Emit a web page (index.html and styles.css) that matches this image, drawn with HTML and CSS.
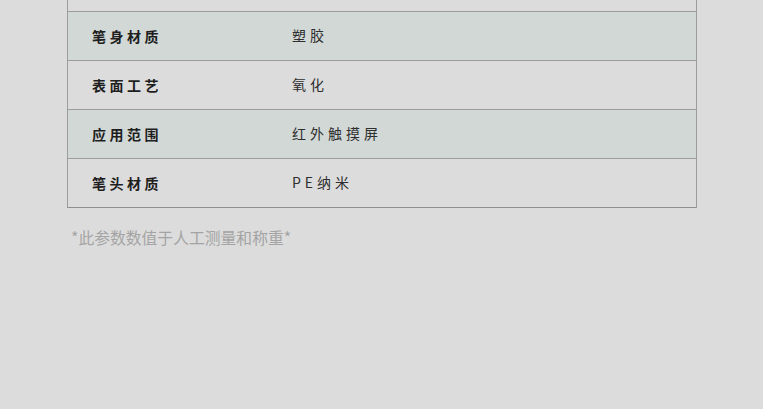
FILE: index.html
```html
<!DOCTYPE html>
<html lang="zh">
<head>
<meta charset="utf-8">
<link rel="stylesheet" href="styles.css">
</head>
<body>
<div class="page">
  <div class="spec">
    <div class="row row-partial"></div>
    <div class="row tint">
      <div class="label">笔身材质</div>
      <div class="value">塑胶</div>
    </div>
    <div class="row">
      <div class="label">表面工艺</div>
      <div class="value">氧化</div>
    </div>
    <div class="row tint">
      <div class="label">应用范围</div>
      <div class="value">红外触摸屏</div>
    </div>
    <div class="row">
      <div class="label">笔头材质</div>
      <div class="value">PE纳米</div>
    </div>
  </div>
  <p class="note">*此参数数值于人工测量和称重*</p>
</div>
</body>
</html>
```
FILE: styles.css
```css
html, body {
  margin: 0;
  padding: 0;
  background: #dcdcdc;
}
.page {
  width: 763px;
  height: 409px;
  box-sizing: border-box;
  padding-left: 67px;
  font-family: "Noto Sans CJK SC", "Noto Sans", sans-serif;
}
.spec {
  width: 630px;
  box-sizing: border-box;
  border-left: 1px solid #9c9c9c;
  border-right: 1px solid #9c9c9c;
  border-bottom: 1px solid #8f8f8f;
}
.row {
  display: grid;
  grid-template-columns: 224px 1fr;
  align-items: center;
  height: 48px;
  border-top: 1px solid #9c9c9c;
}
.row-partial {
  height: 11px;
  border-top: none;
}
.tint {
  background: #d1d8d6;
}
.label {
  padding-left: 24px;
  font-size: 14px;
  font-weight: 700;
  letter-spacing: 3.5px;
  color: #1e1e1e;
  line-height: 20px;
}
.value {
  font-size: 14px;
  letter-spacing: 4px;
  color: #2e2e2e;
  line-height: 20px;
  padding-bottom: 3px;
}
.note {
  margin: 19px 0 0 4px;
  font-size: 15.8px;
  line-height: 22px;
  color: #a4a4a4;
}
```
